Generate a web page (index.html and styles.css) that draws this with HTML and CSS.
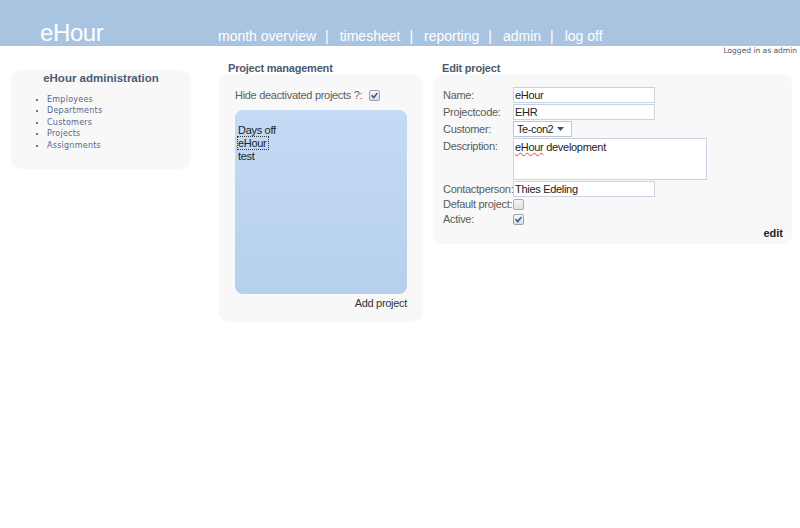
FILE: index.html
```html
<!DOCTYPE html>
<html lang="en">
<head>
<meta charset="utf-8">
<title>eHour - Project management</title>
<link rel="stylesheet" href="styles.css">
</head>
<body>
<header class="topbar">
  <div class="logo">eHour</div>
  <nav class="nav">
    <a class="nav-link">month overview</a><span class="sep">|</span>
    <a class="nav-link">timesheet</a><span class="sep">|</span>
    <a class="nav-link">reporting</a><span class="sep">|</span>
    <a class="nav-link">admin</a><span class="sep">|</span>
    <a class="nav-link">log off</a>
  </nav>
</header>
<div class="loginbar">Logged in as admin</div>
<main class="main">
  <aside class="sidebar">
    <h2 class="sidebar-title">eHour administration</h2>
    <ul class="sidebar-list">
      <li>Employees</li>
      <li>Departments</li>
      <li>Customers</li>
      <li>Projects</li>
      <li>Assignments</li>
    </ul>
  </aside>

  <section class="col col-mid">
    <h3 class="col-title">Project management</h3>
    <div class="panel panel-mid">
      <div class="hide-row">
        <span>Hide deactivated projects ?:</span>
        <span class="cb"><svg width="9" height="9" viewBox="0 0 9 9"><path d="M2 4.6 L3.8 6.6 L7 2.4" fill="none" stroke="#3b5e9e" stroke-width="1.6" stroke-linecap="round" stroke-linejoin="round"/></svg></span>
      </div>
      <div class="listbox">
        <div class="item">Days off</div>
        <div class="item"><span class="focus">eHour</span></div>
        <div class="item">test</div>
      </div>
      <div class="add-row"><a class="link">Add project</a></div>
    </div>
  </section>

  <section class="col col-right">
    <h3 class="col-title">Edit project</h3>
    <div class="panel panel-edit">
      <div class="form">
        <span class="lbl">Name:</span>
        <div class="input w-name">eHour</div>
        <span class="lbl">Projectcode:</span>
        <div class="input w-name">EHR</div>
        <span class="lbl">Customer:</span>
        <div class="input select"><span class="select-text">Te-con2</span><svg class="caret" width="7" height="4" viewBox="0 0 7 4"><path d="M0 0 H7 L3.5 4 Z" fill="#44505e"/></svg></div>
        <span class="lbl">Description:</span>
        <div class="input textarea"><span class="spell">eHour</span> development</div>
        <span class="lbl">Contactperson:</span>
        <div class="input w-name">Thies Edeling</div>
        <span class="lbl lbl-cb first">Default project:</span>
        <div class="cb-cell first"><span class="cb off"></span></div>
        <span class="lbl lbl-cb">Active:</span>
        <div class="cb-cell"><span class="cb"><svg width="9" height="9" viewBox="0 0 9 9"><path d="M2 4.6 L3.8 6.6 L7 2.4" fill="none" stroke="#3b5e9e" stroke-width="1.6" stroke-linecap="round" stroke-linejoin="round"/></svg></span></div>
      </div>
      <div class="edit-row"><a class="link bold">edit</a></div>
    </div>
  </section>
</main>
</body>
</html>
```

FILE: styles.css
```css
html, body {
  margin: 0;
  padding: 0;
  background: #ffffff;
}
body {
  font-family: "Liberation Sans", Arial, sans-serif;
  color: #333;
}

/* header */
.topbar {
  height: 46px;
  background: #a9c4e1;
  display: flex;
  align-items: flex-start;
  padding-left: 40px;
  box-sizing: border-box;
}
.logo {
  width: 178px;
  padding-top: 21px;
  font-size: 24px;
  line-height: 24px;
  color: #ffffff;
  letter-spacing: -0.4px;
}
.nav {
  display: flex;
  gap: 9px;
  padding-top: 28px;
  font-size: 14px;
  line-height: 16px;
  color: #ffffff;
}
.nav-link { color: #ffffff; }
.sep { color: #ffffff; }
.sep + .nav-link { margin-left: 2px; }

.loginbar {
  height: 10px;
  line-height: 10px;
  text-align: right;
  padding-right: 3px;
  font-family: "DejaVu Sans", Verdana, sans-serif;
  font-size: 7.5px;
  color: #4f5868;
}

/* layout */
.main {
  display: flex;
  align-items: flex-start;
  padding: 6px 0 0 11px;
}

/* sidebar */
.sidebar {
  width: 180px;
  height: 99px;
  margin-top: 8px;
  background: #f8f8f8;
  border-radius: 10px;
  box-sizing: border-box;
}
.sidebar-title {
  margin: 0;
  padding-top: 1px;
  text-align: center;
  font-size: 11.5px;
  line-height: 15px;
  font-weight: bold;
  color: #4a5b76;
}
.sidebar-list {
  margin: 8px 0 0;
  padding-left: 36px;
  font-family: "DejaVu Sans", Verdana, sans-serif;
  font-size: 8px;
  letter-spacing: 0.25px;
  line-height: 11.4px;
  color: #56678a;
}
.sidebar-list li::marker { color: #3e4a60; }

/* columns */
.col-mid { width: 204px; margin-left: 28px; }
.col-right { width: 359px; margin-left: 10px; }
.col-title {
  margin: 0;
  padding-left: 9px;
  height: 12px;
  font-size: 11px;
  line-height: 12px;
  font-weight: bold;
  letter-spacing: -0.2px;
  color: #4b5a70;
}
.panel {
  background: #f8f8f8;
  border-radius: 10px;
  font-size: 11px;
  letter-spacing: -0.3px;
}

/* project management */
.panel-mid { padding: 14px 16px 12px; }
.hide-row {
  display: flex;
  align-items: center;
  gap: 7px;
  height: 14px;
  line-height: 14px;
  color: #5e5e5e;
}
.cb {
  display: inline-flex;
  align-items: center;
  justify-content: center;
  width: 11px;
  height: 11px;
  box-sizing: border-box;
  border: 1px solid #9da3aa;
  border-radius: 2px;
  background: linear-gradient(#fbfbfb, #d9dbde);
}
.cb.off { border-color: #a8adb3; background: linear-gradient(#f6f6f6, #dedfe1); }
.listbox {
  margin-top: 8px;
  height: 184px;
  box-sizing: border-box;
  padding: 14px 3px;
  border-radius: 8px;
  background: linear-gradient(#c3dbf5, #b6cfec);
  line-height: 13px;
  color: #222;
}
.focus {
  outline: 1px dotted #3a3a3a;
  padding-right: 2px;
}
.add-row {
  margin-top: 2px;
  text-align: right;
  line-height: 14px;
}
.link { color: #333; }
.bold { font-weight: bold; letter-spacing: 0; color: #222; }

/* edit project */
.panel-edit { padding: 13px 9px 4px 10px; }
.form {
  display: grid;
  grid-template-columns: 70px auto;
  row-gap: 1px;
  align-items: start;
}
.lbl {
  line-height: 16px;
  color: #5c5c5c;
  white-space: nowrap;
}
.input {
  height: 16px;
  box-sizing: border-box;
  border: 1px solid #c7d3e1;
  background: #ffffff;
  padding: 0 1px;
  line-height: 14px;
  color: #222;
}
.w-name { width: 142px; }
.select {
  width: 59px;
  display: flex;
  align-items: center;
  padding: 0 7px 0 3px;
  border-color: #c0c7d0;
}
.select-text { letter-spacing: -0.4px; }
.caret { margin-left: auto; }
.textarea {
  width: 194px;
  height: 42px;
  padding-top: 1px;
}
.spell {
  text-decoration: underline wavy #e04545;
  text-decoration-thickness: 1px;
  text-underline-offset: 1px;
}
.lbl-cb { line-height: 14px; }
.cb-cell {
  height: 14px;
  display: flex;
  align-items: center;
}
.first { margin-top: -1px; }
.edit-row {
  text-align: right;
  line-height: 14px;
}
```
